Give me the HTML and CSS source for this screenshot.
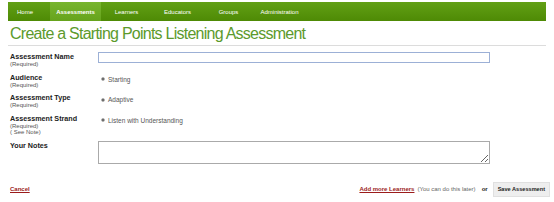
FILE: index.html
```html
<!DOCTYPE html>
<html>
<head>
<meta charset="utf-8">
<link rel="stylesheet" href="styles.css">
</head>
<body>
<div class="page">
  <nav class="nav">
    <a class="tab home">Home</a>
    <a class="tab active">Assessments</a>
    <a class="tab">Learners</a>
    <a class="tab">Educators</a>
    <a class="tab">Groups</a>
    <a class="tab">Administration</a>
  </nav>
  <h1 class="title">Create a Starting Points Listening Assessment</h1>
  <form class="form">
    <div class="row">
      <div class="label"><b>Assessment Name</b><span>(Required)</span></div>
      <div class="field"><input class="text" type="text"></div>
    </div>
    <div class="row">
      <div class="label"><b>Audience</b><span>(Required)</span></div>
      <div class="field radio"><span class="dot"></span>Starting</div>
    </div>
    <div class="row">
      <div class="label"><b>Assessment Type</b><span>(Required)</span></div>
      <div class="field radio"><span class="dot"></span>Adaptive</div>
    </div>
    <div class="row">
      <div class="label"><b>Assessment Strand</b><span>(Required)</span><span>( See Note)</span></div>
      <div class="field radio"><span class="dot"></span>Listen with Understanding</div>
    </div>
    <div class="row">
      <div class="label"><b>Your Notes</b></div>
      <div class="field"><textarea class="notes"></textarea></div>
    </div>
    <div class="actions">
      <a class="link">Cancel</a>
      <div class="right">
        <a class="link">Add more Learners</a>
        <span class="hint">(You can do this later)</span>
        <span class="or">or</span>
        <button class="btn" type="button">Save Assessment</button>
      </div>
    </div>
  </form>
</div>
</body>
</html>
```
FILE: styles.css
```css
html, body { margin: 0; padding: 0; background: #fff; }
body { font-family: "Liberation Sans", Arial, sans-serif; color: #222; }
.page { padding: 2px 8px 0 8px; }
.nav {
  display: flex;
  height: 19px;
  background: linear-gradient(#62a015, #4e8a05);
}
.tab {
  display: flex;
  align-items: center;
  justify-content: center;
  color: #fff;
  font-size: 6px;
  width: 51px;
  flex: none;
}
.tab.home { width: 34px; padding-right: 8px; }
.tab.active {
  background: linear-gradient(#78b52e, #66a31c);
  font-weight: bold;
}
.title {
  margin: 0;
  font-weight: normal;
  font-size: 16px;
  letter-spacing: -0.75px;
  color: #5c9a2c;
  padding: 4px 0 3px 2px;
  border-bottom: 1px solid #dcdcdc;
  line-height: 17px;
}
.form { padding: 6px 0 0 2px; }
.row { display: flex; margin-bottom: 5px; }
.label {
  width: 88px;
  display: flex;
  flex-direction: column;
  font-size: 6px;
  color: #555;
  line-height: 6.5px;
}
.label b { font-size: 7.2px; color: #222; line-height: 9px; }
.field { flex: 0 0 392px; }
.text {
  box-sizing: border-box;
  width: 392px;
  height: 11px;
  margin: 0;
  border: 1px solid #9cb0d6;
  padding: 0;
  display: block;
}
.radio {
  display: flex;
  align-items: center;
  font-size: 6.5px;
  color: #555;
  padding: 3px 0 0 3px;
  height: 7px;
}
.dot {
  width: 4px;
  height: 4px;
  border-radius: 50%;
  border: 1px solid #aaa;
  background: radial-gradient(#555 0 1px, #eee 1.3px);
  margin-right: 3px;
  box-sizing: border-box;
}
.notes {
  box-sizing: border-box;
  width: 392px;
  height: 23px;
  margin: 0;
  border: 1px solid #aaa;
  display: block;
  resize: vertical;
}
.actions {
  display: flex;
  justify-content: space-between;
  align-items: center;
  margin-top: 18px;
  margin-right: -4px;
  font-size: 6px;
}
.link { color: #9b1c1c; font-weight: bold; text-decoration: underline; }
.right { display: flex; align-items: center; }
.hint { color: #666; margin-left: 3px; }
.or { font-weight: bold; margin: 0 5px 0 6px; color: #222; }
.btn {
  font-family: inherit;
  font-size: 5.6px;
  font-weight: bold;
  color: #222;
  background: #eee;
  border: 1px solid #e0e0e0;
  height: 15px;
  padding: 0 4px;
}
```
